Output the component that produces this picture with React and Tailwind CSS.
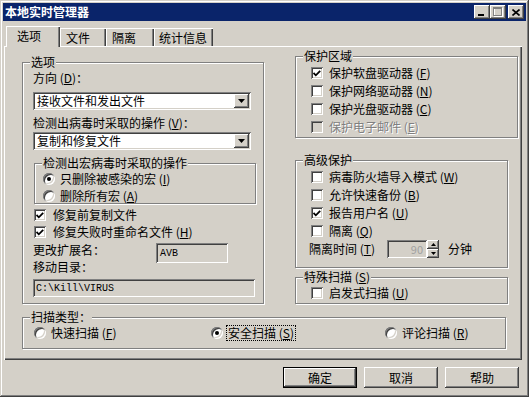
import React from "react";

const RAISED =
  "shadow-[inset_-1px_-1px_#404040,inset_1px_1px_#fff,inset_-2px_-2px_#808080,inset_2px_2px_#d4d0c8]";
const SUNKEN =
  "shadow-[inset_1px_1px_#808080,inset_-1px_-1px_#fff,inset_2px_2px_#404040,inset_-2px_-2px_#d4d0c8]";

function Check({ checked, disabled }) {
  return (
    <div
      className={`w-[12px] h-[12px] shrink-0 flex items-center justify-center ${
        disabled ? "bg-[#d4d0c8]" : "bg-white"
      } shadow-[inset_1px_1px_#808080,inset_-1px_-1px_#fff,inset_2px_2px_#404040,inset_-2px_-2px_#d4d0c8]`}
    >
      {checked && (
        <svg width="8" height="7" viewBox="0 0 8 7">
          <path d="M0.5 3 L2.8 5.3 L7.2 0.8" stroke="#000" strokeWidth="1.8" fill="none" />
        </svg>
      )}
    </div>
  );
}

function Radio({ on }) {
  return (
    <div className="w-[12px] h-[12px] shrink-0 rounded-full bg-white flex items-center justify-center shadow-[inset_1px_1px_#808080,inset_-1px_-1px_#fff,inset_2px_2px_#404040,inset_-2px_-2px_#d4d0c8]">
      {on && <div className="w-[4px] h-[4px] rounded-full bg-black" />}
    </div>
  );
}

function K({ c }) {
  return (
    <>
      (<u className="underline">{c}</u>)
    </>
  );
}

function Group({ label, className = "", boxClass = "", children }) {
  return (
    <div className={`relative pt-[7px] ${className}`}>
      <div className={`border border-[#808080] shadow-[inset_1px_1px_#fff,1px_1px_#fff] ${boxClass}`}>
        {children}
      </div>
      <span className="absolute left-[8px] top-[1px] bg-[#d4d0c8] px-[1px] text-[12px] leading-[12px] whitespace-nowrap">
        {label}
      </span>
    </div>
  );
}

function Combo({ text, className = "" }) {
  return (
    <div className={`w-[218px] h-[18px] bg-white flex items-center p-[2px] ${SUNKEN} ${className}`}>
      <span className="flex-1 pl-[2px] text-[12px] leading-[14px] whitespace-nowrap">{text}</span>
      <div className={`w-[15px] h-[14px] bg-[#d4d0c8] flex items-center justify-center ${RAISED}`}>
        <svg width="7" height="4" viewBox="0 0 7 4">
          <path d="M0 0H7L3.5 4Z" fill="#000" />
        </svg>
      </div>
    </div>
  );
}

function CheckRow({ checked, disabled, children, gap = "gap-[6px]", className = "" }) {
  return (
    <div className={`h-[14px] flex items-center ${gap} ${className}`}>
      <Check checked={checked} disabled={disabled} />
      <span
        className={`text-[12px] leading-[14px] whitespace-nowrap ${
          disabled ? "text-[#808080] [text-shadow:1px_1px_#fff]" : ""
        }`}
      >
        {children}
      </span>
    </div>
  );
}

function RadioRow({ on, children, className = "" }) {
  return (
    <div className={`h-[14px] flex items-center gap-[5px] ${className}`}>
      <Radio on={on} />
      <span className="text-[12px] leading-[14px] whitespace-nowrap">{children}</span>
    </div>
  );
}

function TitleBtn({ children, className = "" }) {
  return (
    <div className={`w-[16px] h-[14px] bg-[#d4d0c8] flex items-center justify-center ${RAISED} ${className}`}>
      {children}
    </div>
  );
}

function Btn({ children, def }) {
  return (
    <div
      className={`w-[74px] h-[21px] bg-[#d4d0c8] flex items-center justify-center text-[12px] leading-[14px] ${
        def ? "border border-black" : ""
      } ${RAISED}`}
    >
      {children}
    </div>
  );
}

export default function App() {
  return (
    <div className="w-[529px] h-[397px] bg-[#d4d0c8] p-[3px] flex flex-col overflow-hidden text-black font-['Noto_Sans_CJK_SC',sans-serif] text-[12px] shadow-[inset_-1px_-1px_#404040,inset_1px_1px_#d4d0c8,inset_-2px_-2px_#808080,inset_2px_2px_#fff]">
      {/* Title bar */}
      <div className="h-[18px] bg-[#0a246a] flex items-center justify-between pl-[2px] pr-[2px]">
        <span className="text-white font-bold text-[12px] leading-[14px]">本地实时管理器</span>
        <div className="flex items-center">
          <TitleBtn>
            <svg width="8" height="8" viewBox="0 0 8 8">
              <rect x="0" y="6" width="6" height="2" fill="#000" />
            </svg>
          </TitleBtn>
          <TitleBtn>
            <svg width="10" height="10" viewBox="0 0 10 10">
              <rect x="1.5" y="1.5" width="8" height="8" stroke="#fff" fill="none" />
              <rect x="0.5" y="0.5" width="8" height="8" stroke="#808080" fill="none" />
              <rect x="0" y="1" width="9" height="1" fill="#808080" />
            </svg>
          </TitleBtn>
          <TitleBtn className="ml-[2px]">
            <svg width="8" height="7" viewBox="0 0 8 7">
              <path d="M0.5 0.5 L7.5 6.5 M7.5 0.5 L0.5 6.5" stroke="#000" strokeWidth="1.6" />
            </svg>
          </TitleBtn>
        </div>
      </div>

      {/* Tabs */}
      <div className="mt-[5px] pl-[3px] h-[20px] flex items-end">
        <div className="relative z-10 w-[54px] h-[21px] -mb-[1px] bg-[#d4d0c8] pl-[11px] pt-[3px] text-[12px] leading-[14px] shadow-[inset_1px_1px_#fff,inset_-1px_0_#404040,inset_-2px_0_#808080]">
          选项
        </div>
        <div className="w-[46px] h-[18px] pl-[6px] pt-[3px] text-[12px] leading-[14px] shadow-[inset_1px_1px_#fff,inset_-1px_0_#404040,inset_-2px_0_#808080]">
          文件
        </div>
        <div className="w-[48px] h-[18px] pl-[6px] pt-[3px] text-[12px] leading-[14px] shadow-[inset_1px_1px_#fff,inset_-1px_0_#404040,inset_-2px_0_#808080]">
          隔离
        </div>
        <div className="w-[59px] h-[18px] pl-[5px] pt-[3px] text-[12px] leading-[14px] shadow-[inset_1px_1px_#fff,inset_-1px_0_#404040,inset_-2px_0_#808080]">
          统计信息
        </div>
      </div>

      {/* Tab panel */}
      <div className="ml-[1px] w-[518px] h-[314px] pt-[3px] pl-[18px] shadow-[inset_1px_1px_#fff,inset_-1px_-1px_#404040,inset_-2px_-2px_#808080]">
        <div className="flex items-start">
          {/* Left column */}
          <Group
            label="选项"
            className="mt-[6px]"
            boxClass="w-[242px] h-[242px] pl-[10px] pt-[7px] flex flex-col"
          >
            <div className="h-[16px] leading-[16px]">
              方向 <K c="D" />：
            </div>
            <Combo className="mt-[6px]" text="接收文件和发出文件" />
            <div className="mt-[5px] h-[16px] leading-[16px]">
              检测出病毒时采取的操作 <K c="V" />：
            </div>
            <Combo className="mt-[1px]" text="复制和修复文件" />
            <Group
              label="检测出宏病毒时采取的操作"
              className="mt-[6px] ml-[1px]"
              boxClass="w-[222px] h-[41px] pl-[8px] pt-[8px] flex flex-col gap-[3px]"
            >
              <RadioRow on>
                只删除被感染的宏 <K c="I" />
              </RadioRow>
              <RadioRow>
                删除所有宏 <K c="A" />
              </RadioRow>
            </Group>
            <CheckRow checked gap="gap-[7px]" className="mt-[4px] ml-[1px]">
              修复前复制文件
            </CheckRow>
            <CheckRow checked gap="gap-[7px]" className="mt-[3px] ml-[1px]">
              修复失败时重命名文件 <K c="H" />
            </CheckRow>
            <div className="mt-[4px] h-[20px] flex items-start">
              <span className="w-[123px] leading-[12px] pt-[1px]">更改扩展名：</span>
              <div
                className={`w-[72px] h-[20px] flex items-center pl-[4px] font-['Liberation_Mono',monospace] text-[10px] ${SUNKEN}`}
              >
                AVB
              </div>
            </div>
            <div className="-mt-[2px] leading-[12px]">移动目录：</div>
            <div
              className={`mt-[6px] w-[222px] h-[18px] flex items-center pl-[3px] font-['Liberation_Mono',monospace] text-[10px] ${SUNKEN}`}
            >
              C:\Kill\VIRUS
            </div>
          </Group>

          {/* Right column */}
          <div className="ml-[31px] flex flex-col">
            <Group
              label="保护区域"
              boxClass="w-[223px] h-[82px] pl-[15px] pt-[9px] flex flex-col gap-[4px]"
            >
              <CheckRow checked>
                保护软盘驱动器 <K c="F" />
              </CheckRow>
              <CheckRow>
                保护网络驱动器 <K c="N" />
              </CheckRow>
              <CheckRow>
                保护光盘驱动器 <K c="C" />
              </CheckRow>
              <CheckRow disabled>
                保护电子邮件 <K c="E" />
              </CheckRow>
            </Group>
            <Group
              label="高级保护"
              className="mt-[15px]"
              boxClass="w-[213px] h-[108px] pl-[15px] pt-[9px] flex flex-col gap-[4px]"
            >
              <CheckRow>
                病毒防火墙导入模式 <K c="W" />
              </CheckRow>
              <CheckRow>
                允许快速备份 <K c="B" />
              </CheckRow>
              <CheckRow checked>
                报告用户名 <K c="U" />
              </CheckRow>
              <CheckRow>
                隔离 <K c="Q" />
              </CheckRow>
              <div className="-mt-[2px] -ml-[2px] h-[18px] flex items-center">
                <span className="w-[78px] leading-[14px] whitespace-nowrap">
                  隔离时间 <K c="T" />
                </span>
                <div className={`w-[40px] h-[18px] flex items-center justify-end pr-[4px] text-[#a0a0a0] text-[11px] ${SUNKEN}`}>
                  90
                </div>
                <div className="w-[12px] h-[18px] flex flex-col">
                  <div className={`h-[9px] bg-[#d4d0c8] flex items-center justify-center ${RAISED}`}>
                    <svg width="5" height="3" viewBox="0 0 5 3">
                      <path d="M0 3H5L2.5 0Z" fill="#000" />
                    </svg>
                  </div>
                  <div className={`h-[9px] bg-[#d4d0c8] flex items-center justify-center ${RAISED}`}>
                    <svg width="5" height="3" viewBox="0 0 5 3">
                      <path d="M0 0H5L2.5 3Z" fill="#000" />
                    </svg>
                  </div>
                </div>
                <span className="ml-[9px] leading-[14px]">分钟</span>
              </div>
            </Group>
            <Group
              label={
                <>
                  特殊扫描 <K c="S" />
                </>
              }
              className="mt-[2px]"
              boxClass="w-[213px] h-[27px] pl-[15px] pt-[8px]"
            >
              <CheckRow>
                启发式扫描 <K c="U" />
              </CheckRow>
            </Group>
          </div>
        </div>

        {/* Scan type */}
        <Group label="扫描类型：" className="mt-[6px]" boxClass="w-[484px] h-[32px] pl-[11px] pt-[8px] flex">
          <div className="w-[177px]">
            <RadioRow>
              快速扫描 <K c="F" />
            </RadioRow>
          </div>
          <div className="w-[174px]">
            <div className="h-[14px] flex items-center gap-[3px]">
              <Radio on />
              <span className="text-[12px] leading-[14px] whitespace-nowrap border border-dotted border-black px-[1px]">
                安全扫描 <K c="S" />
              </span>
            </div>
          </div>
          <div>
            <RadioRow>
              评论扫描 <K c="R" />
            </RadioRow>
          </div>
        </Group>
      </div>

      {/* Buttons */}
      <div className="mt-[7px] pr-[7px] flex justify-end gap-[7px]">
        <Btn def>确定</Btn>
        <Btn>取消</Btn>
        <Btn>帮助</Btn>
      </div>
    </div>
  );
}
